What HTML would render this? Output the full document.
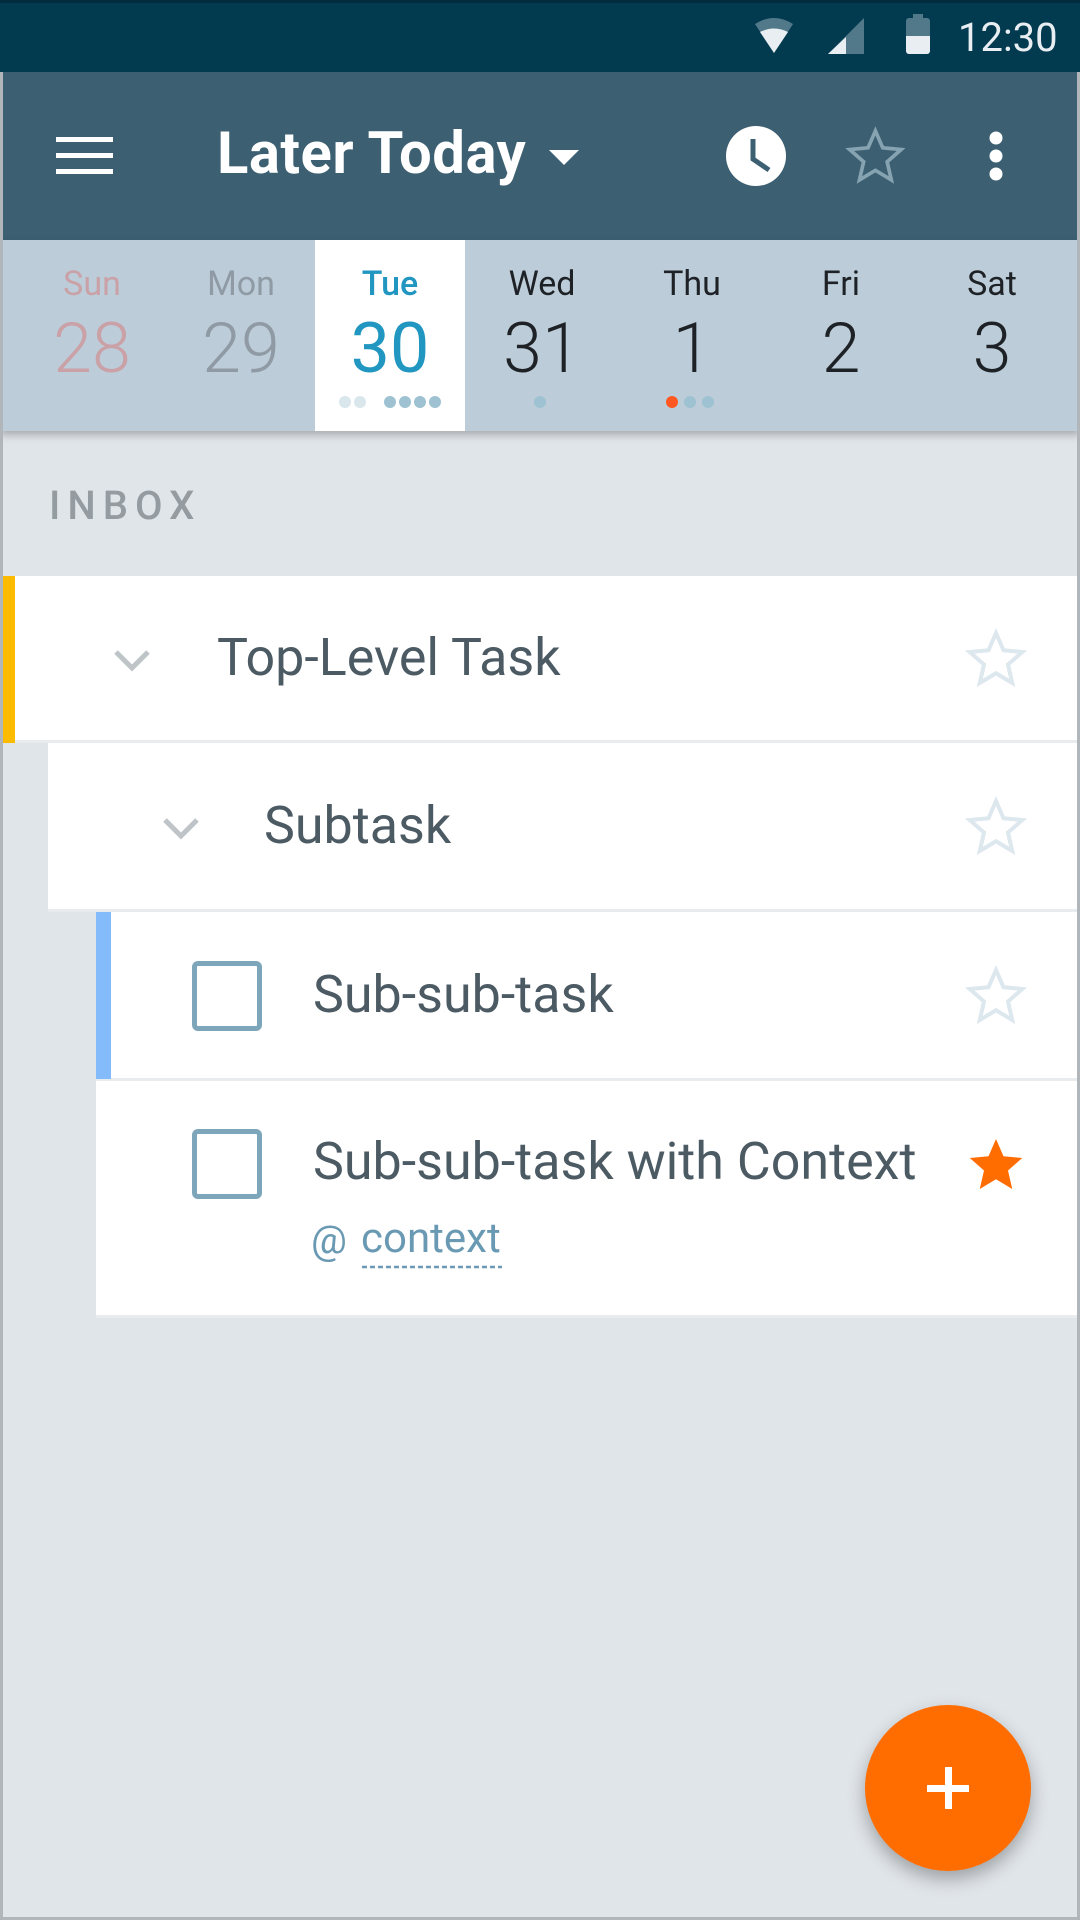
<!DOCTYPE html>
<html><head><meta charset="utf-8"><style>
*{margin:0;padding:0;box-sizing:border-box}
body{width:1080px;height:1920px;overflow:hidden;background:#e0e5e9;font-family:"Roboto","Liberation Sans",sans-serif;position:relative}
.abs{position:absolute}
.status{left:0;top:0;width:1080px;height:72px;background:#023a50;border-top:3px solid #022c3d}
.bar{left:0;top:72px;width:1080px;height:168px;background:#3c6072}
.days{left:0;top:240px;width:1080px;height:191px;background:#bccdd9;box-shadow:0 4px 8px rgba(0,0,0,.25)}
.day{position:absolute;top:0;width:150px;height:191px;text-align:center}
.dn{position:absolute;top:24px;width:100%;font-size:34px}
.dd{position:absolute;top:68px;width:100%;font-size:70px;font-weight:300}
.dot{position:absolute;top:396px;width:12px;height:12px;border-radius:50%;background:#9ec2d2}
.row{position:absolute;background:#fff;border-bottom:3px solid #e9ecee}
.txt{position:absolute;font-size:52px;color:#4c5a63}
.cb{position:absolute;width:70px;height:70px;border:5px solid #7ea6bb;border-radius:6px}
</style></head><body>
<div class="abs status"></div>
<svg class="abs" style="left:750px;top:14px" width="310" height="46" viewBox="750 14 310 46">
<path d="M755 24 Q774 12 793 24 L774 53Z" fill="#527989"/>
<path d="M760 32 Q774 25 788 32 L774 53Z" fill="#e8eef1"/>
<path d="M864 18 L864 54 L828 54Z" fill="#527989"/>
<path d="M846 37 L846 54 L828 54Z" fill="#e8eef1"/>
<rect x="913" y="14" width="10" height="5" fill="#527989"/>
<rect x="906" y="18" width="24" height="36" rx="3" fill="#527989"/>
<path d="M906 36 H930 V51 a3 3 0 0 1 -3 3 H909 a3 3 0 0 1 -3 -3Z" fill="#e8eef1"/>
</svg>
<div class="abs" style="left:958px;top:14px;font-size:40px;color:#e8eef1">12:30</div>
<div class="abs bar"></div>
<div class="abs" style="left:56px;top:137px;width:57px;height:5px;background:#fff"></div>
<div class="abs" style="left:56px;top:153px;width:57px;height:5px;background:#fff"></div>
<div class="abs" style="left:56px;top:169px;width:57px;height:5px;background:#fff"></div>
<div class="abs" style="left:217px;top:120px;font-size:58px;font-weight:bold;color:#fff;letter-spacing:0.5px">Later Today</div>
<svg class="abs" style="left:0;top:72px" width="1080" height="168" viewBox="0 72 1080 168">
<path d="M549 150 L579 150 L564 165Z" fill="#fff"/>
<circle cx="756" cy="156" r="30" fill="#fff"/>
<path d="M753 139 V159 L769 170" stroke="#3c6072" stroke-width="5" fill="none"/>
<g transform="translate(846,126) scale(2.45)"><path d="M12 2l3 6.9 7.5.7-5.7 5 1.7 7.4L12 18.1 5.5 22l1.7-7.4-5.7-5 7.5-.7z" fill="none" stroke="#86a3b2" stroke-width="1.5" stroke-linejoin="miter"/></g>
<circle cx="996" cy="138" r="6.5" fill="#fff"/><circle cx="996" cy="156" r="6.5" fill="#fff"/><circle cx="996" cy="174" r="6.5" fill="#fff"/>
</svg>
<div class="abs days">
<div class="day" style="left:17px"><div class="dn" style="color:#c9a1a7">Sun</div><div class="dd" style="color:#c9a1a7">28</div></div>
<div class="day" style="left:166px"><div class="dn" style="color:#8f9aa4">Mon</div><div class="dd" style="color:#8f9aa4">29</div></div>
<div class="day" style="left:315px;background:#fff"><div class="dn" style="color:#2196c0;font-weight:500">Tue</div><div class="dd" style="color:#2196c0;font-weight:400">30</div></div>
<div class="day" style="left:467px"><div class="dn" style="color:#1e2226">Wed</div><div class="dd" style="color:#1e2226">31</div></div>
<div class="day" style="left:617px"><div class="dn" style="color:#1e2226">Thu</div><div class="dd" style="color:#1e2226">1</div></div>
<div class="day" style="left:766px"><div class="dn" style="color:#1e2226">Fri</div><div class="dd" style="color:#1e2226">2</div></div>
<div class="day" style="left:917px"><div class="dn" style="color:#1e2226">Sat</div><div class="dd" style="color:#1e2226">3</div></div>
</div>
<div class="dot" style="left:339px;background:#d9e7ed"></div><div class="dot" style="left:354px;background:#d9e7ed"></div>
<div class="dot" style="left:384px"></div><div class="dot" style="left:399px"></div><div class="dot" style="left:414px"></div><div class="dot" style="left:429px"></div>
<div class="dot" style="left:534px"></div>
<div class="dot" style="left:666px;background:#fe5722"></div><div class="dot" style="left:684px"></div><div class="dot" style="left:702px"></div>
<div class="abs" style="left:49px;top:482px;font-size:40px;font-weight:500;color:#959ca1;letter-spacing:7px">INBOX</div>

<div class="row" style="left:0;top:576px;width:1080px;height:167px"></div>
<div class="abs" style="left:0;top:576px;width:15px;height:167px;background:#fdbb00"></div>
<div class="row" style="left:48px;top:743px;width:1032px;height:169px"></div>
<div class="row" style="left:96px;top:912px;width:984px;height:169px"></div>
<div class="abs" style="left:96px;top:912px;width:15px;height:167px;background:#84bcfb"></div>
<div class="row" style="left:96px;top:1081px;width:984px;height:237px"></div>

<svg class="abs" style="left:0;top:0" width="1080" height="1920" viewBox="0 0 1080 1920">
<path d="M116 652 L132 668 L148 652" stroke="#bec4c7" stroke-width="5" fill="none"/>
<path d="M165 820 L181 836 L197 820" stroke="#bec4c7" stroke-width="5" fill="none"/>
<defs><path id="st" d="M12 2l3 6.9 7.5.7-5.7 5 1.7 7.4L12 18.1 5.5 22l1.7-7.4-5.7-5 7.5-.7z"/></defs>
<g transform="translate(966,628) scale(2.5)"><use href="#st" fill="none" stroke="#dde7ee" stroke-width="1.6"/></g>
<g transform="translate(966,796) scale(2.5)"><use href="#st" fill="none" stroke="#dde7ee" stroke-width="1.6"/></g>
<g transform="translate(966,965) scale(2.5)"><use href="#st" fill="none" stroke="#dde7ee" stroke-width="1.6"/></g>
<g transform="translate(966,1134) scale(2.5)"><use href="#st" fill="#ff6d00"/></g>
<line x1="362" y1="1267" x2="502" y2="1267" stroke="#6a9ab3" stroke-width="2.5" stroke-dasharray="5 3"/>
</svg>
<div class="txt" style="left:217px;top:627px">Top-Level Task</div>
<div class="txt" style="left:264px;top:795px">Subtask</div>
<div class="cb" style="left:192px;top:961px"></div>
<div class="txt" style="left:313px;top:964px">Sub-sub-task</div>
<div class="cb" style="left:192px;top:1129px"></div>
<div class="txt" style="left:313px;top:1131px">Sub-sub-task with Context</div>
<div class="abs" style="left:311px;top:1216px;font-size:40px;color:#6a9ab3">@</div>
<div class="abs" style="left:361px;top:1214px;font-size:42px;color:#6a9ab3">context</div>

<div class="abs" style="left:865px;top:1705px;width:166px;height:166px;border-radius:50%;background:#ff6d00;box-shadow:0 8px 18px rgba(0,0,0,.3)"></div>
<div class="abs" style="left:927px;top:1785px;width:42px;height:7px;background:#fff"></div>
<div class="abs" style="left:945px;top:1767px;width:7px;height:42px;background:#fff"></div>
<div class="abs" style="left:0;top:72px;width:3px;height:1848px;background:#b0b6ba"></div>
<div class="abs" style="left:1077px;top:72px;width:3px;height:1848px;background:#b0b6ba"></div>
<div class="abs" style="left:0;top:1917px;width:1080px;height:3px;background:#b0b6ba"></div>
</body></html>
